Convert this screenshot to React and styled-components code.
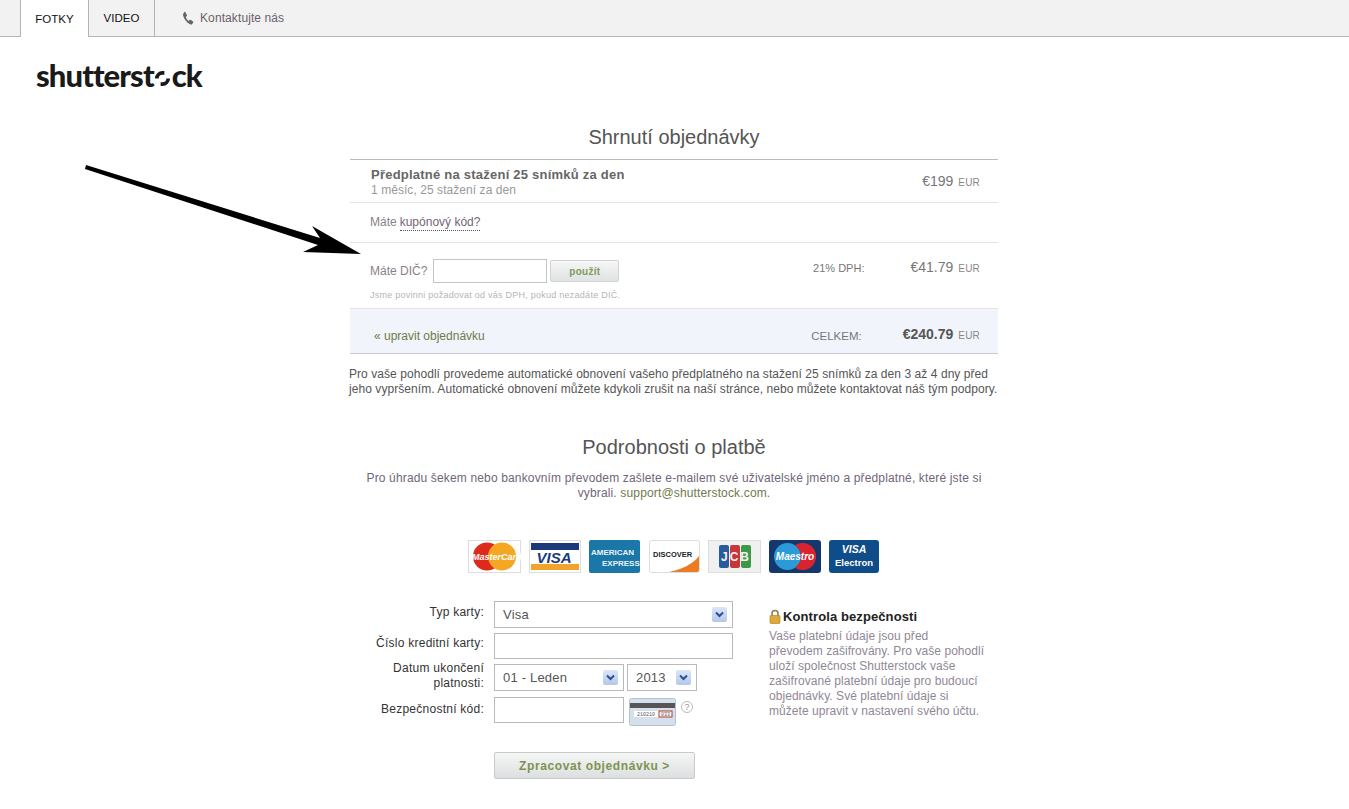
import React from 'react';
import styled, {createGlobalStyle} from 'styled-components';

const Global = createGlobalStyle`
html, body {
    margin: 0;
    padding: 0;
    background: #fff;
    font-family: "Liberation Sans", Arial, sans-serif;
    color: #666;
}
* { box-sizing: border-box; }
`

const Page = styled.div`
position: relative;
width: 1349px;
height: 809px;
overflow: hidden;
`

const TopBar = styled.div`
display: flex;
height: 37px;
padding-left: 20px;
background: #f2f2f2;
border-bottom: 1px solid #b4b4b4;
`

const Tab = styled.a`
display: flex;
align-items: center;
justify-content: center;
width: ${p => p.$w}px;
height: ${p => p.$active ? 37 : 36}px;
font-size: 11.5px;
color: #111;
background: ${p => p.$active ? '#fff' : 'transparent'};
border-right: 1px solid #b4b4b4;
border-left: ${p => p.$active ? '1px solid #b4b4b4' : 'none'};
`

const Contact = styled.a`
display: flex;
align-items: center;
gap: 6px;
margin-left: 27px;
font-size: 12px;
letter-spacing: 0.1px;
color: #6b5f6b;
`

const LogoRow = styled.div`
display: flex;
align-items: center;
height: 32px;
margin: 22px 0 0 36px;
font-family: Lato, sans-serif;
font-weight: 900;
font-size: 31px;
letter-spacing: -0.9px;
color: #1a1a1a;
line-height: 32px;
`

const LogoO = styled.svg`
width: 17px;
height: 17px;
margin: 7px 1px 0 0;
`

const Column = styled.div`
width: 648px;
margin: 34px 0 0 350px;
`

const Title = styled.h2`
margin: 0;
font-size: 20px;
font-weight: 400;
line-height: 24px;
text-align: center;
color: #555;
`

const Summary = styled.div`
margin-top: 10px;
border-top: 1px solid #bbb;
`

const Row = styled.div`
display: flex;
align-items: ${p => p.$align || 'center'};
justify-content: space-between;
height: ${p => p.$h}px;
padding: ${p => p.$pad || '0 18px 0 21px'};
background: ${p => p.$tint ? '#f1f5fb' : '#fff'};
border-bottom: 1px solid ${p => p.$tint ? '#c6cad2' : '#e4e4e4'};
`

const ItemInfo = styled.div`
padding-top: 3px;
`

const ItemName = styled.div`
font-size: 13px;
font-weight: 700;
line-height: 15px;
color: #666;
letter-spacing: 0.23px;
`

const ItemSub = styled.div`
margin-top: 1px;
font-size: 12px;
line-height: 15px;
letter-spacing: 0.06px;
color: #999;
`

const Price = styled.span`
font-size: 14px;
font-weight: ${p => p.$big ? 700 : 400};
color: ${p => p.$big ? '#555' : '#777'};
`

const Cur = styled.span`
margin-left: 5px;
font-size: 10px;
font-weight: 400;
letter-spacing: 0.2px;
color: #888;
`

const Muted = styled.span`
font-size: 12px;
color: #8a7f8a;
`

const Dotted = styled.a`
color: #75657a;
border-bottom: 1px dotted #555;
margin-left: 3px;
padding-bottom: 1px;
`

const VatRow = styled.div`
display: flex;
align-items: center;
`

const VatInput = styled.input`
width: 114px;
height: 24px;
margin-left: 6px;
border: 1px solid #c4c4c4;
background: #fff;
`

const SmallButton = styled.button`
width: 69px;
height: 22px;
margin-left: 3px;
padding: 0;
font: 700 10px "Liberation Sans", sans-serif;
letter-spacing: 0.3px;
color: #7f9a5a;
background: linear-gradient(#f6f7f7, #dfe2e3);
border: 1px solid #d2d4d4;
border-radius: 2px;
`

const Hint = styled.div`
margin-top: 7px;
font-size: 9px;
line-height: 11px;
letter-spacing: 0.25px;
color: #b5b5b5;
`

const VatLeft = styled.div`
padding-top: 16px;
`

const VatRight = styled.div`
display: flex;
align-items: baseline;
justify-content: flex-end;
padding-top: 15px;
`

const Label = styled.span`
margin-right: ${p => p.$mr}px;
margin-top: ${p => p.$mt || 0}px;
font-size: ${p => p.$size || 11}px;
color: #777;
`

const BackLink = styled.a`
font-size: 12px;
color: #6f7a4a;
padding-top: 10px;
`

const TotalRight = styled.div`
display: flex;
align-items: flex-start;
padding-top: 5px;
`

const Note = styled.p`
margin: 13px -1px 0;
font-size: 12px;
line-height: 15px;
letter-spacing: 0.06px;
color: #555;
white-space: nowrap;
`

const SecondTitle = styled(Title)`
margin-top: 38px;
`

const Intro = styled.p`
margin: 12px 0 0;
font-size: 12px;
line-height: 15px;
letter-spacing: 0.15px;
color: #70667a;
text-align: center;
`

const Mail = styled.a`
color: #6f7a4a;
`

const Cards = styled.div`
display: flex;
justify-content: center;
gap: 8px;
margin: 39px 0 0 -1px;
`

const FormWrap = styled.div`
display: flex;
margin-top: 28px;
`

const Form = styled.div`
display: grid;
grid-template-columns: 135px 130px 3px 70px 36px;
width: 374px;
margin-left: 9px;
`

const FieldLabel = styled.label`
grid-column: 1;
padding-right: 10px;
font-size: 12px;
line-height: 15px;
letter-spacing: 0.25px;
text-align: right;
color: #333;
margin-top: ${p => p.$mt || 0}px;
`

const Select = styled.div`
display: flex;
align-items: center;
justify-content: space-between;
grid-column: ${p => p.$col};
height: 27px;
margin-bottom: ${p => p.$mb || 0}px;
padding: 0 5px 0 8px;
font-size: 13px;
letter-spacing: 0.2px;
color: #555;
border: 1px solid #b9b9b9;
background: #fff;
`

const Arrow = styled.span`
display: flex;
align-items: center;
justify-content: center;
width: 15px;
height: 15px;
background: linear-gradient(#dbe6f8, #b4c8ea);
border-radius: 2px;
`

const Input = styled.input`
grid-column: ${p => p.$col};
height: ${p => p.$h}px;
margin-bottom: ${p => p.$mb || 0}px;
border: 1px solid #b9b9b9;
background: #fff;
`

const CvvCell = styled.div`
grid-column: 3 / 6;
display: flex;
align-items: flex-start;
padding: 1px 0 0 5px;
`

const Help = styled.span`
display: flex;
align-items: center;
justify-content: center;
width: 12px;
height: 12px;
margin: 3px 0 0 5px;
font-size: 9px;
color: #999;
border: 1px solid #bbb;
border-radius: 50%;
`

const Submit = styled.button`
grid-column: 2 / 6;
justify-self: start;
width: 201px;
height: 27px;
margin-top: 26px;
padding: 0;
font: 700 12px "Liberation Sans", sans-serif;
letter-spacing: 0.6px;
color: #7c9450;
background: linear-gradient(#f5f6f6, #dcdfe0);
border: 1px solid #c9cbcb;
border-radius: 2px;
`

const Aside = styled.aside`
width: 229px;
margin: 7px 0 0 36px;
`

const AsideTitle = styled.div`
display: flex;
align-items: center;
gap: 2px;
height: 16px;
font-size: 13px;
font-weight: 700;
letter-spacing: 0.1px;
color: #222;
`

const AsideText = styled.p`
margin: 5px 0 0;
font-size: 12px;
line-height: 15px;
letter-spacing: 0.05px;
color: #8f8796;
`

const Pointer = styled.svg`
position: absolute;
left: 80px;
top: 160px;
width: 290px;
height: 100px;
`

const CardSvg = ({w = 53, children}) => (
    <svg width={w} height="33" viewBox={`0 0 ${w} 33`}>{children}</svg>
)

const cardText = {fontFamily: '"Liberation Sans", sans-serif', fontWeight: 700}

const MasterCard = () => (
    <CardSvg>
        <rect x=".5" y=".5" width="52" height="32" fill="#fff" stroke="#ddd"/>
        <circle cx="19" cy="16.5" r="14" fill="#dd2a1b"/>
        <circle cx="34" cy="16.5" r="14" fill="#f5a623"/>
        <text x="4" y="19.5" fontSize="9" fontStyle="italic" fill="#fff" style={cardText}>MasterCard</text>
    </CardSvg>
)

const Visa = () => (
    <CardSvg w={52}>
        <rect x=".5" y=".5" width="51" height="32" fill="#fff" stroke="#ddd"/>
        <rect x="2" y="3" width="48" height="7" fill="#1a3a7c"/>
        <rect x="2" y="24" width="48" height="6" fill="#f2a32a"/>
        <text x="25" y="22.5" textAnchor="middle" fontSize="15" fontStyle="italic" fill="#1a3a7c" style={cardText}>VISA</text>
    </CardSvg>
)

const Amex = () => (
    <CardSvg w={52}>
        <rect x="0" width="51" height="33" rx="2" fill="#1a77a8"/>
        <text x="2" y="15" fontSize="8" fill="#e8f4fa" style={cardText}>AMERICAN</text>
        <text x="13" y="26" fontSize="8" fill="#e8f4fa" style={cardText}>EXPRESS</text>
    </CardSvg>
)

const Discover = () => (
    <CardSvg w={51}>
        <rect x=".5" y=".5" width="50" height="32" rx="2" fill="#fff" stroke="#ddd"/>
        <path d="M20 32 Q42 27 50 16 V30 a2 2 0 0 1 -2 2 Z" fill="#ee7a22"/>
        <text x="4" y="17" fontSize="7.5" fill="#222" style={cardText}>DISCOVER</text>
    </CardSvg>
)

const Jcb = () => (
    <CardSvg>
        <rect x=".5" y=".5" width="52" height="32" fill="#f0f0f0" stroke="#ddd"/>
        <rect x="11" y="5" width="10" height="23" rx="2" fill="#2a5a9e"/>
        <rect x="22" y="5" width="10" height="23" rx="2" fill="#c8363c"/>
        <rect x="33" y="5" width="10" height="23" rx="2" fill="#3b9a4a"/>
        <text x="27" y="21" textAnchor="middle" fontSize="12" fill="#f4f4f4" style={cardText} textLength="28">JCB</text>
    </CardSvg>
)

const Maestro = () => (
    <CardSvg w={52}>
        <rect width="52" height="33" rx="3" fill="#14386e"/>
        <circle cx="18.5" cy="16.5" r="13.5" fill="#2b9bd8"/>
        <path d="M26 5.3 A13.5 13.5 0 1 1 26 27.7 A13.5 13.5 0 0 0 26 5.3 Z" fill="#d9232e"/>
        <text x="26" y="19.5" textAnchor="middle" fontSize="10" fontStyle="italic" fill="#fff" style={cardText}>Maestro</text>
    </CardSvg>
)

const Electron = () => (
    <CardSvg w={50}>
        <rect width="50" height="33" rx="3" fill="#0f4c8a"/>
        <text x="25" y="13" textAnchor="middle" fontSize="10.5" fontStyle="italic" fill="#fff" style={cardText}>VISA</text>
        <text x="25" y="26" textAnchor="middle" fontSize="9.5" fill="#fff" style={cardText}>Electron</text>
    </CardSvg>
)

const Chevron = () => (
    <svg width="9" height="7" viewBox="0 0 9 7">
        <path d="M1 1.5 L4.5 5 L8 1.5" fill="none" stroke="#2c4f8f" strokeWidth="2"/>
    </svg>
)

const Phone = () => (
    <svg width="12" height="14" viewBox="0 0 24 24" preserveAspectRatio="none">
        <path d="M6.6 1.5 L9.8 7 C10.2 7.8 9.9 8.5 9.3 9 L7.6 10.3 C8.6 13 10.8 15.6 13.6 17 L15.2 15.4 C15.8 14.9 16.5 14.8 17.1 15.2 L22 18.2 C22.7 18.7 22.8 19.5 22.3 20.2 L20 22.5 C19 23.3 17.6 23.3 16 22.6 C9.5 20 4 14 2.2 7.8 C1.8 6.2 2 4.8 3 3.8 L4.8 1.6 C5.3 1 6.2 1 6.6 1.5 Z" fill="#666"/>
    </svg>
)

const Lock = () => (
    <svg width="12" height="15" viewBox="0 0 12 15">
        <path d="M3 7 V4.5 a3 3 0 0 1 6 0 V7" fill="none" stroke="#8a7a50" strokeWidth="1.5"/>
        <rect x="1" y="6.5" width="10" height="8" rx="1" fill="#e0a83a" stroke="#a97c20" strokeWidth=".6"/>
    </svg>
)

const CvvCard = () => (
    <svg width="47" height="28" viewBox="0 0 47 28">
        <rect x=".5" y=".5" width="46" height="27" rx="2" fill="#d5e0ec" stroke="#b3c2d2"/>
        <rect x="1" y="5" width="45" height="5" fill="#555"/>
        <rect x="5" y="13" width="38" height="6" fill="#fff"/>
        <text x="8" y="18" fontSize="5" fill="#555" fontFamily='"Liberation Mono", monospace'>210210</text>
        <rect x="30" y="13" width="13" height="6" fill="#fff" stroke="#b8342c"/>
        <text x="32" y="18" fontSize="5" fill="#555" fontFamily='"Liberation Mono", monospace'>033</text>
    </svg>
)

export default function App() {
    return (
        <Page>
            <Global/>
            <TopBar>
                <Tab $w={69} $active>FOTKY</Tab>
                <Tab $w={66}>VIDEO</Tab>
                <Contact><Phone/>Kontaktujte nás</Contact>
            </TopBar>
            <LogoRow>
                shutterst
                <LogoO viewBox="0 0 18 18">
                    <path d="M3 9 A6 6 0 0 1 9 3 H11" fill="none" stroke="#1a1a1a" strokeWidth="4"/>
                    <path d="M15 9 A6 6 0 0 1 9 15 H7" fill="none" stroke="#1a1a1a" strokeWidth="4"/>
                </LogoO>
                ck
            </LogoRow>
            <Column>
                <Title>Shrnutí objednávky</Title>
                <Summary>
                    <Row $h={43}>
                        <ItemInfo>
                            <ItemName>Předplatné na stažení 25 snímků za den</ItemName>
                            <ItemSub>1 měsíc, 25 stažení za den</ItemSub>
                        </ItemInfo>
                        <span><Price>€199</Price><Cur>EUR</Cur></span>
                    </Row>
                    <Row $h={40} $pad="0 20px 2px">
                        <Muted>Máte<Dotted>kupónový kód?</Dotted></Muted>
                    </Row>
                    <Row $h={66} $align="flex-start" $pad="0 18px 0 20px">
                        <VatLeft>
                            <VatRow>
                                <Muted>Máte DIČ?</Muted>
                                <VatInput/>
                                <SmallButton>použít</SmallButton>
                            </VatRow>
                            <Hint>Jsme povinni požadovat od vás DPH, pokud nezadáte DIČ.</Hint>
                        </VatLeft>
                        <VatRight>
                            <Label $mr={46}>21% DPH:</Label>
                            <span><Price>€41.79</Price><Cur>EUR</Cur></span>
                        </VatRight>
                    </Row>
                    <Row $h={45} $tint $pad="0 18px 0 24px">
                        <BackLink>« upravit objednávku</BackLink>
                        <TotalRight>
                            <Label $mr={41} $size={11.5} $mt={5}>CELKEM:</Label>
                            <span><Price $big>€240.79</Price><Cur>EUR</Cur></span>
                        </TotalRight>
                    </Row>
                </Summary>
                <Note>
                    Pro vaše pohodlí provedeme automatické obnovení vašeho předplatného na stažení 25 snímků za den 3 až 4 dny před<br/>
                    jeho vypršením. Automatické obnovení můžete kdykoli zrušit na naší stránce, nebo můžete kontaktovat náš tým podpory.
                </Note>
                <SecondTitle>Podrobnosti o platbě</SecondTitle>
                <Intro>
                    Pro úhradu šekem nebo bankovním převodem zašlete e-mailem své uživatelské jméno a předplatné, které jste si<br/>
                    vybrali. <Mail>support@shutterstock.com</Mail>.
                </Intro>
                <Cards>
                    <MasterCard/><Visa/><Amex/><Discover/><Jcb/><Maestro/><Electron/>
                </Cards>
                <FormWrap>
                    <Form>
                        <FieldLabel $mt={4}>Typ karty:</FieldLabel>
                        <Select $col="2 / 6" $mb={5}>Visa<Arrow><Chevron/></Arrow></Select>
                        <FieldLabel $mt={3}>Číslo kreditní karty:</FieldLabel>
                        <Input $col="2 / 6" $h={26} $mb={5}/>
                        <FieldLabel $mt={-3}>Datum ukončení platnosti:</FieldLabel>
                        <Select $col="2" $mb={6}>01 - Leden<Arrow><Chevron/></Arrow></Select>
                        <Select $col="4 / 5" $mb={6}>2013<Arrow><Chevron/></Arrow></Select>
                        <FieldLabel $mt={5}>Bezpečnostní kód:</FieldLabel>
                        <Input $col="2" $h={26}/>
                        <CvvCell><CvvCard/><Help>?</Help></CvvCell>
                        <Submit>Zpracovat objednávku &gt;</Submit>
                    </Form>
                    <Aside>
                        <AsideTitle><Lock/>Kontrola bezpečnosti</AsideTitle>
                        <AsideText>
                            Vaše platební údaje jsou před<br/>
                            převodem zašifrovány. Pro vaše pohodlí<br/>
                            uloží společnost Shutterstock vaše<br/>
                            zašifrované platební údaje pro budoucí<br/>
                            objednávky. Své platební údaje si<br/>
                            můžete upravit v nastavení svého účtu.
                        </AsideText>
                    </Aside>
                </FormWrap>
            </Column>
            <Pointer viewBox="0 0 290 100">
                <path d="M6 5 L240 78 L232 66 L281 94 L223 92 L238 85 L5 9 Z" fill="#000"/>
            </Pointer>
        </Page>
    )
}
